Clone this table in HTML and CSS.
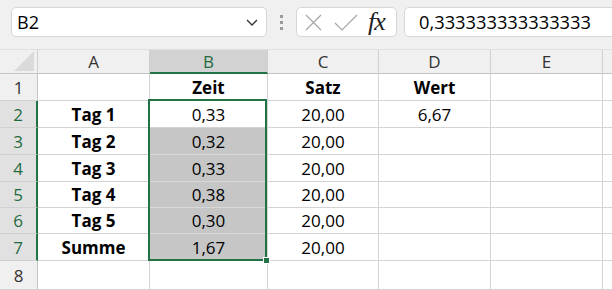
FILE: index.html
```html
<!DOCTYPE html>
<html lang="de">
<head>
    <meta charset="UTF-8">
    <title>Tabelle</title>
    <link rel="stylesheet" href="styles.css">
</head>
<body>
    <div class="toolbar">
        <div class="namebox">
            <span>B2</span>
            <svg class="chevron" width="12" height="7" viewBox="0 0 12 7">
                <path d="M1 1 L6 6 L11 1" fill="none" stroke="#333" stroke-width="1.3"/>
            </svg>
        </div>
        <div class="dots"><i></i><i></i><i></i></div>
        <div class="fnbox">
            <svg width="17" height="17" viewBox="0 0 17 17">
                <path d="M1 1 L16 16 M16 1 L1 16" stroke="#a6a6a6" stroke-width="1.2" fill="none"/>
            </svg>
            <svg width="24" height="17" viewBox="0 0 24 17">
                <path d="M1 9 L8 16 L23 1" stroke="#a6a6a6" stroke-width="1.2" fill="none"/>
            </svg>
            <span class="fx">fx</span>
        </div>
        <div class="formula">0,333333333333333</div>
    </div>

    <div class="sheet">
        <div class="hd corner">
            <svg width="22" height="22" viewBox="0 0 22 22">
                <polygon points="21,1 21,21 1,21" fill="#dadada"/>
            </svg>
        </div>
        <div class="hd">A</div>
        <div class="hd hl">B</div>
        <div class="hd">C</div>
        <div class="hd">D</div>
        <div class="hd">E</div>
        <div class="hd last"></div>

        <div class="rh">1</div>
        <div class="c"></div>
        <div class="c b">Zeit</div>
        <div class="c b">Satz</div>
        <div class="c b">Wert</div>
        <div class="c"></div>
        <div class="c last"></div>

        <div class="rh hl">2</div>
        <div class="c b">Tag 1</div>
        <div class="c">0,33</div>
        <div class="c">20,00</div>
        <div class="c">6,67</div>
        <div class="c"></div>
        <div class="c last"></div>

        <div class="rh hl">3</div>
        <div class="c b">Tag 2</div>
        <div class="c sel">0,32</div>
        <div class="c">20,00</div>
        <div class="c"></div>
        <div class="c"></div>
        <div class="c last"></div>

        <div class="rh hl">4</div>
        <div class="c b">Tag 3</div>
        <div class="c sel">0,33</div>
        <div class="c">20,00</div>
        <div class="c"></div>
        <div class="c"></div>
        <div class="c last"></div>

        <div class="rh hl">5</div>
        <div class="c b">Tag 4</div>
        <div class="c sel">0,38</div>
        <div class="c">20,00</div>
        <div class="c"></div>
        <div class="c"></div>
        <div class="c last"></div>

        <div class="rh hl">6</div>
        <div class="c b">Tag 5</div>
        <div class="c sel">0,30</div>
        <div class="c">20,00</div>
        <div class="c"></div>
        <div class="c"></div>
        <div class="c last"></div>

        <div class="rh hl">7</div>
        <div class="c b">Summe</div>
        <div class="c sel">1,67</div>
        <div class="c">20,00</div>
        <div class="c"></div>
        <div class="c"></div>
        <div class="c last"></div>

        <div class="rh">8</div>
        <div class="c"></div>
        <div class="c"></div>
        <div class="c"></div>
        <div class="c"></div>
        <div class="c"></div>
        <div class="c last"></div>

        <div class="selection"></div>
        <div class="handle"></div>
    </div>
</body>
</html>
```

FILE: styles.css
```css
* {
    box-sizing: border-box;
}
body {
    margin: 0;
    background-color: #f0f0f0;
    font-family: "Open Sans", "Noto Sans", sans-serif;
    color: #000;
    overflow: hidden;
}

.toolbar {
    display: flex;
    align-items: center;
    height: 49px;
    padding: 7px 0 12px 11px;
}
.namebox,
.fnbox,
.formula {
    height: 30px;
    background-color: #fff;
    border: 1px solid #d6d6d6;
    border-radius: 5px;
}
.namebox {
    width: 256px;
    display: flex;
    align-items: center;
    justify-content: space-between;
    padding: 0 8px 0 5px;
    font-size: 18px;
}
.dots {
    width: 3px;
    margin: 0 13px;
    display: flex;
    flex-direction: column;
    gap: 3px;
}
.dots i {
    display: block;
    width: 3px;
    height: 3px;
    background-color: #9a9a9a;
}
.fnbox {
    width: 101px;
    display: flex;
    align-items: center;
    padding: 0 0 0 8px;
    gap: 12px;
}
.fx {
    font-family: "Liberation Serif", serif;
    font-style: italic;
    font-size: 26px;
    color: #222;
    margin-left: -2px;
    line-height: 1;
    letter-spacing: -1px;
}
.formula {
    flex: 1;
    margin-left: 7px;
    margin-right: -20px;
    padding-left: 14px;
    font-size: 18.3px;
    line-height: 27px;
}

.sheet {
    position: relative;
    display: grid;
    grid-template-columns: 38px 112px 118px 111px 112px 112px 1fr;
    grid-template-rows: 25px 27px 27px 27px 27px 26px 26px 27px 29px;
    background-color: #fff;
}
.hd,
.rh,
.c {
    display: flex;
    align-items: center;
    justify-content: center;
    border-right: 1px solid #d4d4d4;
    border-bottom: 1px solid #d4d4d4;
}
.hd {
    background-color: #f0f0f0;
    border-top: 1px solid #e0e0e0;
    border-right-color: #d0d0d0;
    border-bottom-color: #c4c4c4;
    font-size: 17px;
    color: #333;
}
.hd.corner {
    justify-content: flex-end;
    align-items: flex-end;
    padding: 0 2px 1px 0;
}
.hd.hl {
    background-color: #d2d2d2;
    color: #1f6b40;
    border-bottom: 2px solid #217346;
}
.rh {
    background-color: #f0f0f0;
    border-right-color: #c4c4c4;
    border-bottom-color: #d0d0d0;
    font-size: 17px;
    color: #333;
}
.rh.hl {
    background-color: #e1e1e1;
    color: #1f6b40;
    border-right: 2px solid #217346;
}
.c {
    font-size: 17px;
}
.c.b {
    font-weight: bold;
}
.c.sel {
    background-color: #c6c6c6;
    border-bottom-color: #d8d8d8;
}
.last {
    border-right: none;
}

.selection {
    position: absolute;
    left: 148px;
    top: 50px;
    width: 119px;
    height: 162px;
    border: 2px solid #217346;
    pointer-events: none;
}
.handle {
    position: absolute;
    left: 263px;
    top: 208px;
    width: 7px;
    height: 7px;
    background-color: #217346;
    border: 1px solid #fff;
}
```
